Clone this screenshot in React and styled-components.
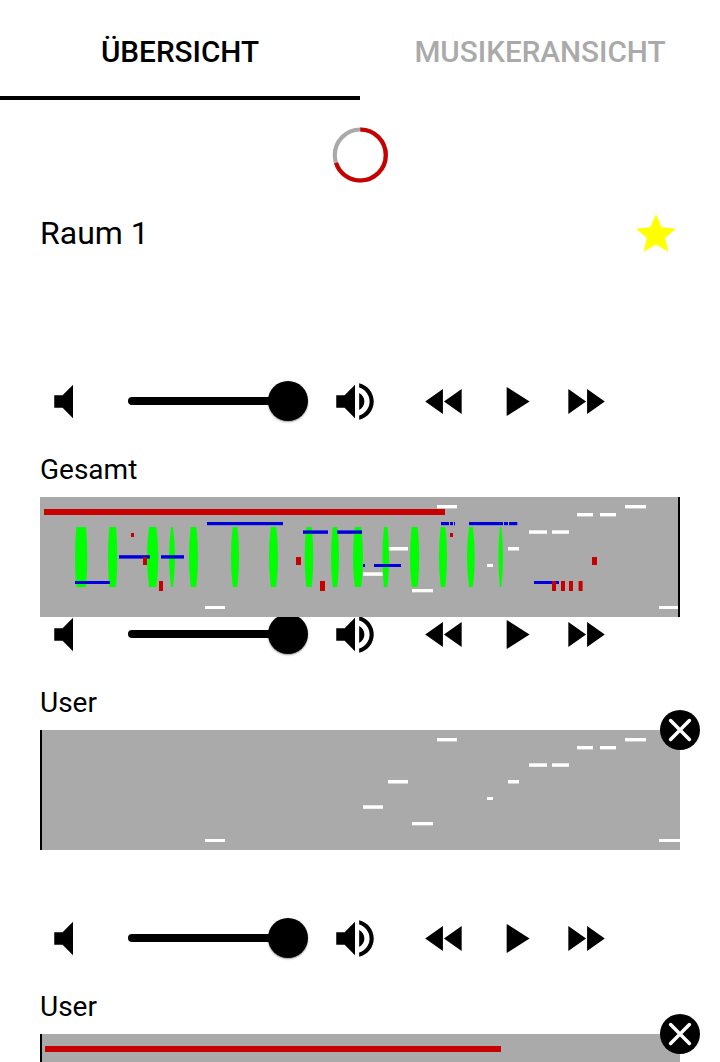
import React from "react";
import styled, { createGlobalStyle } from "styled-components";

const GlobalStyle = createGlobalStyle`
  * { box-sizing: border-box; }
  body {
    margin: 0;
    background: #fff;
    color: #000;
    font-family: Roboto, "Liberation Sans", sans-serif;
    overflow: hidden;
  }
`;

const Screen = styled.div`
  width: 720px;
  height: 1062px;
  overflow: hidden;
  background: #fff;
`;

const TabBar = styled.nav`
  display: flex;
  height: 100px;
`;

const Tab = styled.button`
  flex: 1;
  padding: 8px 0 0;
  border: 0;
  border-bottom: 4px solid ${(p) => (p.$active ? "#000" : "transparent")};
  background: none;
  color: ${(p) => (p.$active ? "#000" : "#aaa")};
  font: 500 29.7px/1 Roboto, "Liberation Sans", sans-serif;
`;

const ProgressRow = styled.div`
  display: flex;
  justify-content: center;
  height: 110px;
  padding-top: 27px;
`;

const RoomHeader = styled.header`
  display: flex;
  align-items: center;
  justify-content: space-between;
  height: 48px;
  margin-bottom: 118px;
  padding: 0 40px;
`;

const RoomName = styled.h1`
  margin: 0;
  padding-bottom: 2px;
  font-size: 32px;
  font-weight: 400;
  line-height: 46px;
`;

const Favourite = styled.svg`
  display: block;
  width: 48px;
  height: 48px;
  fill: #ff0;
`;

const Track = styled.section`
  padding: 0 40px;
  margin-bottom: ${(p) => p.$gap}px;
`;

const Controls = styled.div`
  display: flex;
  align-items: flex-end;
  height: ${(p) => (p.$clipped ? 42 : 50)}px;
  padding-left: 8px;
  overflow: hidden;
`;

const Icon = styled.svg`
  display: block;
  flex: none;
  width: 50px;
  height: 50px;
  margin-left: ${(p) => p.$space || 0}px;
  fill: #000;
`;

const Slider = styled.div`
  display: flex;
  flex: none;
  align-items: center;
  width: 180px;
  height: 50px;
  margin-left: 30px;
`;

const Rail = styled.div`
  flex: 1;
  height: 8px;
  margin-right: -10px;
  border-radius: 4px;
  background: #000;
`;

const Thumb = styled.div`
  width: 40px;
  height: 40px;
  border-radius: 50%;
  background: #000;
  box-shadow: 0 1px 2px rgba(0, 0, 0, 0.4);
`;

const TrackName = styled.h2`
  height: 71px;
  margin: 0;
  padding-top: 27px;
  font-size: 28px;
  font-weight: 400;
  line-height: 34px;
`;

const Panel = styled.div`
  position: relative;
  height: 120px;
  background: #aaa;
`;

const Score = styled.svg`
  display: block;
  width: 640px;
  height: 120px;
`;

const RemoveButton = styled.button`
  position: absolute;
  top: -20px;
  right: -20px;
  display: grid;
  place-items: center;
  width: 40px;
  height: 40px;
  padding: 0;
  border: 0;
  border-radius: 50%;
  background: #000;
`;

const ICONS = {
  mute: "M3 9v6h4l5 5V4L7 9H3z",
  loud: "M3 9v6h4l5 5V4L7 9H3zm13.5 3c0-1.77-1.02-3.29-2.5-4.03v8.05c1.48-.73 2.5-2.25 2.5-4.02zM14 3.23v2.06c2.89.86 5 3.54 5 6.71s-2.11 5.85-5 6.71v2.06c4.01-.91 7-4.49 7-8.77s-2.99-7.86-7-8.77z",
  rewind: "M11 18V6l-8.5 6 8.5 6zm.5-6l8.5 6V6l-8.5 6z",
  play: "M8 5v14l11-7z",
  forward: "M4 18l8.5-6L4 6v12zm9-12v12l8.5-6L13 6z",
};

// Notes are [x, y, width, height] inside the 640x120 score.
const WHITE = [
  [165, 109, 20, 3], [323, 75.3, 20, 3.5], [348, 50, 20, 3.5], [372, 92, 21, 3.3],
  [397, 8, 20, 3.4], [447, 67, 6, 3], [468, 50, 11, 3.5], [489, 33.3, 18, 3.5],
  [512, 33.3, 17, 3.5], [537, 16, 16, 3.4], [560, 16, 16, 3.4], [585, 8, 21, 3.4],
  [619, 109, 21, 3],
];

const BLUE = [
  [35, 84, 35, 3], [79, 58.2, 31, 3.4], [121, 58.2, 23, 3.4], [167, 25, 76, 3.2],
  [263, 33.4, 25, 3.4], [297, 33.4, 25, 3.4], [323, 67, 2, 3], [334, 67, 27, 3],
  [401, 25, 8, 3.2], [410, 25, 3, 3.2], [414, 25, 1, 3.2], [429, 25, 34, 3.2],
  [464, 25, 4, 3.2], [469, 25, 8.3, 3.2], [494, 84, 18, 3], [514, 84, 5, 3],
];

const RED = [
  [4, 12, 401, 6], [91, 36, 3, 4], [103, 60, 4, 8], [119, 84, 4, 10],
  [256, 60, 5, 8], [280, 84, 5, 10], [410, 36, 3, 4], [552, 60, 5, 8],
  [512, 84, 4, 10], [521, 84, 4, 10], [529, 84, 4, 10], [538.6, 84, 4, 10],
];

// Drum hits are [left, right, inset at the ends].
const GREEN = [
  [35, 47.3, 1.3], [68, 77.3, 1.3], [107, 118.3, 2], [129, 135, 2.1], [149, 158, 1.7],
  [191, 199, 1.7], [229, 238, 1.8], [264.7, 273.3, 1.6], [291, 299, 1.7], [313, 323, 1.8],
  [342.4, 349, 1.5], [370, 379.3, 1.7], [399, 407, 1.7], [427, 434.8, 2], [458.4, 463, 1.6],
];

const hitPath = ([l, r, i]) =>
  `M${l + i} 30H${r - i}Q${r + i} 60 ${r - i} 90H${l + i}Q${l - i} 60 ${l + i} 30Z`;

function Notes({ items, color }) {
  return (
    <g fill={color}>
      {items.map(([x, y, w, h], i) => (
        <rect key={i} x={x} y={y} width={w} height={h} />
      ))}
    </g>
  );
}

function Glyph({ name, space }) {
  return (
    <Icon viewBox="0 -0.24 24 24" $space={space} aria-label={name}>
      <path d={ICONS[name]} />
    </Icon>
  );
}

function Player({ clipped }) {
  return (
    <Controls $clipped={clipped}>
      <Glyph name="mute" />
      <Slider>
        <Rail />
        <Thumb />
      </Slider>
      <Glyph name="loud" space={22} />
      <Glyph name="rewind" space={40} />
      <Glyph name="play" space={20} />
      <Glyph name="forward" space={20} />
    </Controls>
  );
}

function TrackItem({ name, gap, clipped, removable, cursor, children }) {
  return (
    <Track $gap={gap}>
      <Player clipped={clipped} />
      <TrackName>{name}</TrackName>
      <Panel>
        <Score viewBox="0 0 640 120">
          {children}
          <rect x={cursor} width="2" height="120" fill="#000" />
        </Score>
        {removable && (
          <RemoveButton aria-label="Entfernen">
            <svg width="40" height="40" viewBox="0 0 40 40">
              <path d="M10.6 10.6 29.4 29.4M29.4 10.6 10.6 29.4" stroke="#fff" strokeWidth="3.5" strokeLinecap="round" />
            </svg>
          </RemoveButton>
        )}
      </Panel>
    </Track>
  );
}

export default function App() {
  return (
    <Screen>
      <GlobalStyle />
      <TabBar>
        <Tab $active>ÜBERSICHT</Tab>
        <Tab>MUSIKERANSICHT</Tab>
      </TabBar>
      <ProgressRow>
        <svg width="56" height="56" viewBox="0 0 56 56" fill="none" strokeWidth="4.2">
          <circle cx="28.3" cy="28" r="25.5" stroke="#aaa" />
          <circle cx="28.3" cy="28" r="25.5" stroke="#c80000" pathLength="100" strokeDasharray="70 30" transform="rotate(-90 28.3 28)" />
        </svg>
      </ProgressRow>
      <RoomHeader>
        <RoomName>Raum 1</RoomName>
        <Favourite viewBox="0 0 24 24">
          <path d="M12 17.27L18.18 21l-1.64-7.03L22 9.24l-7.19-.61L12 2 9.19 8.63 2 9.24l5.46 4.73L5.82 21z" />
        </Favourite>
      </RoomHeader>
      <TrackItem name="Gesamt" gap={0} cursor={638}>
        <Notes items={WHITE} color="#fff" />
        <g fill="#0f0">
          {GREEN.map((hit, i) => (
            <path key={i} d={hitPath(hit)} />
          ))}
        </g>
        <Notes items={BLUE} color="#0000dc" />
        <Notes items={RED} color="#c80000" />
      </TrackItem>
      <TrackItem name="User" gap={63} cursor={0} clipped removable>
        <Notes items={WHITE} color="#fff" />
      </TrackItem>
      <TrackItem name="User" gap={0} cursor={0} removable>
        <Notes items={[[5, 12, 456, 6]]} color="#c80000" />
      </TrackItem>
    </Screen>
  );
}
